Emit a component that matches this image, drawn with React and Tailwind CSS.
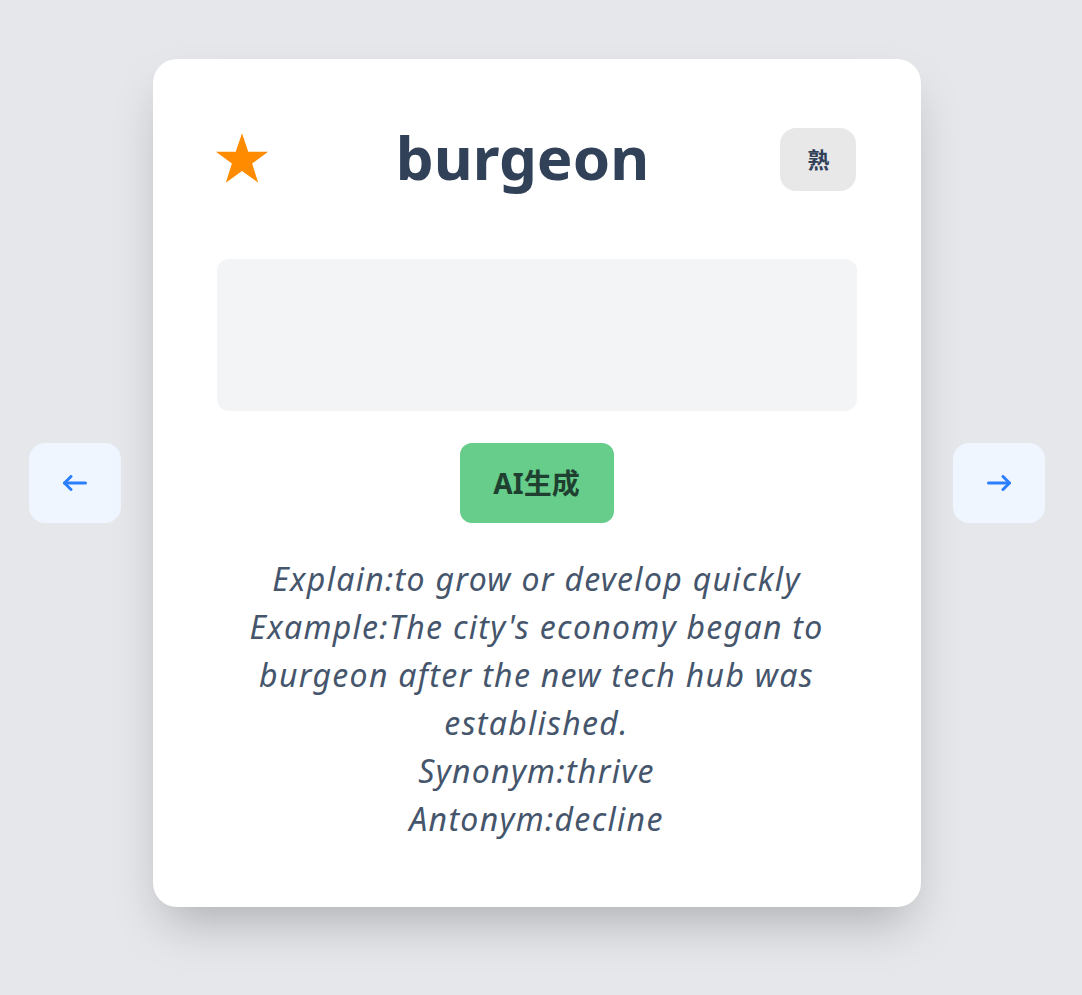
const WORD = {
  text: "burgeon",
  explain: "to grow or develop quickly",
  example: "The city's economy began to burgeon after the new tech hub was established.",
  synonym: "thrive",
  antonym: "decline",
};

function Star() {
  return (
    <svg width="54" height="52" viewBox="0 0 24 23" className="shrink-0 -ml-0.5">
      <polygon
        fill="#ff8c00"
        points="12,0 14.8,8.3 23.6,8.3 16.5,13.5 19.2,22 12,16.8 4.8,22 7.5,13.5 0.4,8.3 9.2,8.3"
      />
    </svg>
  );
}

// simple stroked arrow, pointing left unless flipped
function Arrow({ right = false }) {
  return (
    <svg
      width="26"
      height="16"
      viewBox="0 0 26 16"
      fill="none"
      stroke="currentColor"
      strokeWidth="3"
      strokeLinecap="round"
      strokeLinejoin="round"
      className={right ? "-scale-x-100" : ""}
    >
      <path d="M2.5 8H23.5" />
      <path d="M9 1.5L2.5 8L9 14.5" />
    </svg>
  );
}

function NavButton({ children }) {
  return (
    <button
      type="button"
      className="w-[92px] h-[80px] shrink-0 rounded-2xl bg-blue-50 text-blue-500 flex items-center justify-center"
    >
      {children}
    </button>
  );
}

export default function App() {
  return (
    <div
      className="min-h-screen bg-gray-200 pt-[59px] pb-[88px] flex justify-center items-center gap-8 pr-[9px]"
      style={{ fontFamily: '"Noto Sans", "Noto Sans CJK SC", sans-serif' }}
    >
      <NavButton>
        <Arrow />
      </NavButton>

      {/* Card */}
      <div className="w-[768px] bg-white rounded-3xl shadow-2xl p-16 flex flex-col">
        {/* Header */}
        <div className="h-[72px] flex items-center justify-between">
          <Star />
          <h1 className="text-[60px] leading-none font-bold text-slate-700 pb-1 mr-1">
            {WORD.text}
          </h1>
          <button
            type="button"
            className="w-[76px] h-[63px] rounded-2xl bg-[#e8e8e8] text-slate-700 text-[22px] font-bold flex items-center justify-center"
          >
            熟
          </button>
        </div>

        {/* Notes box */}
        <div className="mt-16 h-[152px] rounded-xl bg-gray-100" />

        {/* AI button */}
        <div className="mt-8 flex justify-center">
          <button
            type="button"
            className="w-[154px] h-[80px] rounded-xl bg-[#66cd8a] text-[#1f4030] text-[28px] font-bold"
          >
            AI生成
          </button>
        </div>

        {/* Details */}
        <div className="mt-8 text-center italic text-slate-600 text-[32px] leading-[48px] tracking-[1.3px]">
          <p>Explain:{WORD.explain}</p>
          <p>Example:{WORD.example}</p>
          <p>Synonym:{WORD.synonym}</p>
          <p>Antonym:{WORD.antonym}</p>
        </div>
      </div>

      <NavButton>
        <Arrow right />
      </NavButton>
    </div>
  );
}
